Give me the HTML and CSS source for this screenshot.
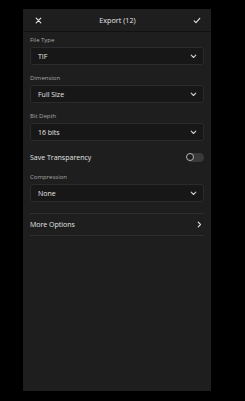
FILE: index.html
```html
<!DOCTYPE html>
<html lang="en">

<head>
    <meta charset="UTF-8">
    <meta name="viewport" content="width=device-width, initial-scale=1.0">
    <title>Export</title>
    <link rel="stylesheet" href="styles.css">
</head>

<body>
    <div class="panel">
        <!-- Header -->
        <div class="header">
            <span class="icon-btn">
                <svg width="7" height="7" viewBox="0 0 7 7"><path d="M1.2 1.2L5.8 5.8M5.8 1.2L1.2 5.8" stroke="#e6e6e6" stroke-width="1.1" stroke-linecap="round"/></svg>
            </span>
            <span class="title">Export (12)</span>
            <span class="icon-btn">
                <svg width="8" height="7" viewBox="0 0 8 7"><path d="M1.2 3.9L3 5.6L6.8 1.4" stroke="#e6e6e6" stroke-width="1.1" fill="none" stroke-linecap="round" stroke-linejoin="round"/></svg>
            </span>
        </div>

        <!-- Settings -->
        <div class="body">
            <div class="field">
                <div class="label">File Type</div>
                <div class="select">
                    <span>TIF</span>
                    <svg class="chev" width="7" height="5" viewBox="0 0 7 5"><path d="M1.2 1.2L3.5 3.5L5.8 1.2" stroke="#cfcfcf" stroke-width="1.1" fill="none" stroke-linecap="round" stroke-linejoin="round"/></svg>
                </div>
            </div>
            <div class="field">
                <div class="label">Dimension</div>
                <div class="select">
                    <span>Full Size</span>
                    <svg class="chev" width="7" height="5" viewBox="0 0 7 5"><path d="M1.2 1.2L3.5 3.5L5.8 1.2" stroke="#cfcfcf" stroke-width="1.1" fill="none" stroke-linecap="round" stroke-linejoin="round"/></svg>
                </div>
            </div>
            <div class="field">
                <div class="label">Bit Depth</div>
                <div class="select">
                    <span>16 bits</span>
                    <svg class="chev" width="7" height="5" viewBox="0 0 7 5"><path d="M1.2 1.2L3.5 3.5L5.8 1.2" stroke="#cfcfcf" stroke-width="1.1" fill="none" stroke-linecap="round" stroke-linejoin="round"/></svg>
                </div>
            </div>
            <div class="row toggle-row">
                <span>Save Transparency</span>
                <span class="toggle"><span class="knob"></span></span>
            </div>
            <div class="field">
                <div class="label">Compression</div>
                <div class="select">
                    <span>None</span>
                    <svg class="chev" width="7" height="5" viewBox="0 0 7 5"><path d="M1.2 1.2L3.5 3.5L5.8 1.2" stroke="#cfcfcf" stroke-width="1.1" fill="none" stroke-linecap="round" stroke-linejoin="round"/></svg>
                </div>
            </div>
            <div class="row more">
                <span>More Options</span>
                <svg width="5" height="7" viewBox="0 0 5 7"><path d="M1.2 1.2L3.5 3.5L1.2 5.8" stroke="#e0e0e0" stroke-width="1.1" fill="none" stroke-linecap="round" stroke-linejoin="round"/></svg>
            </div>
        </div>
    </div>
</body>

</html>
```

FILE: styles.css
```css
/* Export dialog */
body {
    background-color: #000;
    margin: 0;
    padding: 9px 0 0 23px;
    font-family: "Open Sans", "Liberation Sans", sans-serif;
    color: #e2e2e2;
}
.panel {
    width: 188px;
    height: 382px;
    background-color: #1e1e1e;
}
/* Header bar */
.header {
    height: 22px;
    border-bottom: 1px solid #121212;
    display: flex;
    align-items: center;
    justify-content: space-between;
    padding: 0 10px 0 11px;
}
.icon-btn {
    display: flex;
    align-items: center;
    justify-content: center;
    width: 8px;
    height: 8px;
}
.title {
    font-size: 7.2px;
    color: #e6e6e6;
}
.body {
    padding: 4px 7px 0 7px;
}
.field + .field {
    margin-top: 9px;
}
.label {
    font-size: 6px;
    line-height: 9px;
    height: 9px;
    color: #a8a8a8;
    margin-bottom: 2px;
}
.select {
    height: 16px;
    border: 1px solid #2b2b2b;
    border-radius: 3px;
    background-color: #171717;
    display: flex;
    align-items: center;
    justify-content: space-between;
    padding: 0 6px 0 7px;
    font-size: 7px;
    color: #e6e6e6;
}
.chev {
    display: block;
}
.row {
    display: flex;
    align-items: center;
    justify-content: space-between;
    font-size: 7px;
    color: #e2e2e2;
}
.toggle-row {
    height: 14px;
    margin: 9px 0 9px 0;
}
/* Switch */
.toggle {
    width: 17px;
    height: 9px;
    border-radius: 5px;
    background-color: #3a3a3a;
    display: flex;
    align-items: center;
}
.knob {
    width: 6px;
    height: 6px;
    border-radius: 50%;
    border: 1.5px solid #b4b4b4;
    background-color: #1e1e1e;
    margin-left: -1px;
}
.more {
    margin-top: 11px;
    height: 21px;
    border-top: 1px solid #2e2e2e;
    border-bottom: 1px solid #2e2e2e;
    padding-right: 2px;
}
```
